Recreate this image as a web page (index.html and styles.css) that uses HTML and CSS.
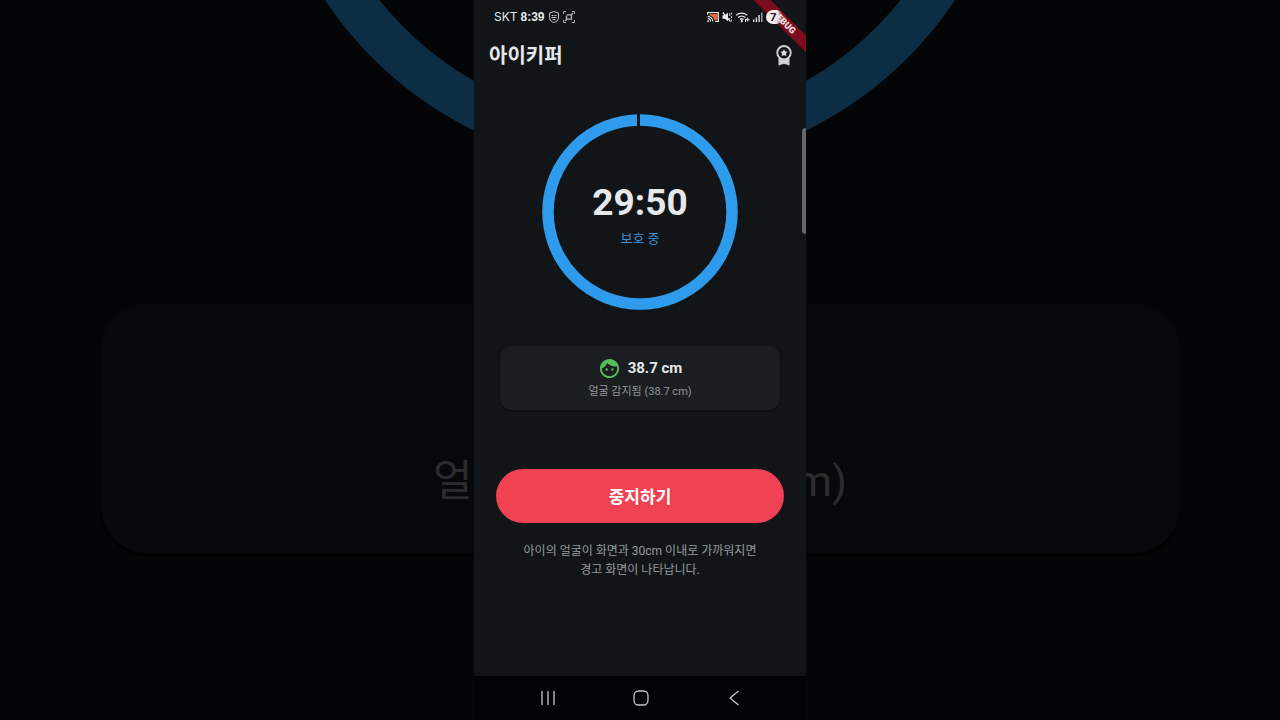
FILE: index.html
```html
<!DOCTYPE html>
<html lang="ko">
<head>
<meta charset="utf-8">
<meta name="viewport" content="width=device-width, initial-scale=1">
<title>아이키퍼</title>
<link rel="stylesheet" href="styles.css">
</head>
<body>
<div class="stage">
  <svg class="backdrop" viewBox="0 0 1280 720" preserveAspectRatio="xMidYMid slice" aria-hidden="true">
    <rect width="1280" height="720" fill="#030506"/>
    <circle cx="640" cy="-209" r="356" fill="none" stroke="#0d2d45" stroke-width="44"/>
    <rect x="101" y="307" width="1079" height="249" rx="46" fill="#010202"/>
    <rect x="101" y="304" width="1079" height="249" rx="46" fill="#070809"/>
    <text class="backdrop-text" x="433" y="496">얼</text>
    <text class="backdrop-text" x="847" y="496" text-anchor="end">m)</text>
  </svg>

  <div class="phone">
    <div class="ribbon">DEBUG</div>
    <div class="status">
      <div class="status-side">
        <span>SKT</span>
        <b class="clock">8:39</b>
        <svg class="glyph" viewBox="0 0 12 12" fill="none" stroke="#c4c7c8">
          <path d="M6 .6 10.500 2v4.800C10.500 9.500 8 10.900 6 11.500 4 10.900 1.500 9.500 1.500 6.800V2z"/>
          <path d="M3.500 4.500h2m1 0h2M3.500 6.500h5M4.500 8.500h3"/>
        </svg>
        <svg class="glyph" viewBox="0 0 12 12" fill="none" stroke="#b8bcbd">
          <path d="M.6 3V.6H3M9 .6h2.400V3M.6 9v2.400H3M9 11.400h2.400V9"/>
          <path d="M4 3.800h4.500v4.400H3.500V4.500M8 4l1.800-1.800M4 8 2.200 9.800" stroke-width="1.300"/>
        </svg>
      </div>
      <div class="status-side status-right">
        <svg class="glyph" viewBox="0 0 13 12">
          <path d="M2.500 2.500h9v7H8C7.500 6.500 5.500 4.600 2.500 4z" fill="#e8683f"/>
          <path d="M.7 3.500V1.200h11.600v9.600H8.500M.7 5.300a5.500 5.500 0 0 1 5.500 5.500M.7 7.700a3.100 3.100 0 0 1 3.100 3.100" fill="none" stroke="#eee" stroke-width="1.200"/>
          <circle cx="1.200" cy="10.500" r="1" fill="#eee"/>
        </svg>
        <svg class="glyph" viewBox="0 0 12 12">
          <path d="M1.500 4.200h2.300L7 1.800v8.400L3.800 7.800H1.500z" fill="#eee"/>
          <path d="M1.800 1.500 9.500 10.500" stroke="#eee" stroke-width="1.200"/>
          <path d="M8.700 2v3m0 2v1M10.500 1.500v2m0 1.500v2m0 1.500v2" stroke="#ccc"/>
        </svg>
        <svg class="glyph glyph-wide" viewBox="0 0 15 12" fill="none" stroke="#eee" stroke-width="1.300">
          <path d="M1.200 4.400a8 8 0 0 1 11 0M3.100 6.500a5.200 5.200 0 0 1 7.200 0M5 8.500a2.600 2.600 0 0 1 3.500 0"/>
          <circle cx="6.800" cy="10.200" r=".5"/>
          <path d="M10.500 8v3M12.700 6.500v4M11 8.700h3.500" stroke-width="1"/>
        </svg>
        <svg class="glyph" viewBox="0 0 12 12" fill="#e2e2e2">
          <path d="M1 8.500h1.400V11H1zM3.700 6.500h1.400V11H3.700zM6.400 4h1.400v7H6.400z"/>
          <path d="M9.100 1.500h1.400V11H9.100z" fill="#a5a8aa"/>
        </svg>
        <span class="battery">7</span>
      </div>
    </div>

    <header class="appbar">
      <h1 class="title">아이키퍼</h1>
      <button class="award" type="button" aria-label="보상">
        <svg viewBox="0 0 16 21">
          <path d="M2.500 12h11v8.500L8 18.700l-5.500 1.800z" fill="#cfd2d4"/>
          <circle cx="8" cy="7.700" r="6.700" fill="#111518" stroke="#cfd2d4" stroke-width="1.900"/>
          <path d="m8 4 1.100 2.500 2.700.3-2 1.800.6 2.700L8 9.900l-2.400 1.400.6-2.700-2-1.800 2.700-.3z" fill="#dfe2e4"/>
        </svg>
      </button>
    </header>

    <main class="content">
      <div class="timer">
        <svg class="ring" viewBox="0 0 196 196" aria-hidden="true">
          <circle cx="98" cy="98" r="92" fill="none" stroke="#2e9bec" stroke-width="11.500"/>
          <path d="M96.500 0v14" stroke="#111518" stroke-width="3"/>
        </svg>
        <div class="readout">
          <div class="time">29:50</div>
          <div class="state">보호 중</div>
        </div>
      </div>

      <section class="card">
        <div class="distance">
          <svg class="face" viewBox="0 0 24 24" fill="#57bb5b">
            <path d="M10.250 13a1.250 1.250 0 1 1-2.500 0 1.250 1.250 0 0 1 2.500 0zM15 11.750a1.250 1.250 0 1 0 0 2.500 1.250 1.250 0 0 0 0-2.500zM22 12c0 5.520-4.480 10-10 10S2 17.520 2 12 6.480 2 12 2s10 4.480 10 10zM20 12c0-.780-.120-1.530-.330-2.240-.700.150-1.420.240-2.170.240-3.130 0-5.920-1.440-7.760-3.690C8.690 8.870 6.600 10.880 4 11.860 4.010 11.900 4 11.950 4 12c0 4.410 3.590 8 8 8s8-3.590 8-8z"/>
          </svg>
          <strong>38.7 cm</strong>
        </div>
        <p class="detected">얼굴 감지됨 (38.7 cm)</p>
      </section>

      <button class="stop" type="button">중지하기</button>
      <p class="hint">아이의 얼굴이 화면과 30cm 이내로 가까워지면<br>경고 화면이 나타납니다.</p>
    </main>

    <div class="edge-handle"></div>

    <nav class="navbar">
      <button type="button" aria-label="최근 앱"><svg viewBox="0 0 16 16"><path d="M2 1v14M8 1v14M14 1v14"/></svg></button>
      <button type="button" aria-label="홈"><svg viewBox="0 0 16 16"><rect x="1" y="1" width="14" height="14" rx="4.500"/></svg></button>
      <button type="button" aria-label="뒤로"><svg viewBox="0 0 16 16"><path d="M12.500 1 4 8l8.500 7"/></svg></button>
    </nav>
  </div>
</div>
</body>
</html>
```

FILE: styles.css
```css
* {
  box-sizing: border-box;
}

body {
  margin: 0;
  background: #030506;
  color: #e6e8ea;
  font-family: Roboto, "Noto Sans CJK KR", sans-serif;
}

h1,
p {
  margin: 0;
}

button {
  border: 0;
  padding: 0;
  background: none;
  color: inherit;
  font: inherit;
  cursor: pointer;
}

.stage {
  position: relative;
  display: flex;
  justify-content: center;
  min-height: 100vh;
  overflow: hidden;
}

.backdrop {
  position: absolute;
  inset: 0;
  width: 100%;
  height: 100%;
}

.backdrop-text {
  fill: #2b2c2d;
  font-size: 43px;
}

.phone {
  position: relative;
  display: flex;
  flex-direction: column;
  min-height: 100vh;
  aspect-ratio: 83 / 180;
  overflow: hidden;
  background: #111518;
}

.ribbon {
  position: absolute;
  top: 16px;
  right: -28px;
  width: 100px;
  transform: rotate(45deg);
  background: #7c0d1c;
  color: #f4e6e8;
  font-size: 9px;
  font-weight: 900;
  line-height: 12px;
  text-align: center;
}

.status {
  position: relative;
  display: flex;
  justify-content: space-between;
  padding: 8px 23px 0 20px;
  font-family: Inter, sans-serif;
  font-size: 12px;
  line-height: 18px;
}

.status-side {
  display: flex;
  align-items: center;
  gap: 3px;
}

.status-right {
  gap: 2px;
}

.clock {
  font-family: "Liberation Sans", sans-serif;
}

.glyph {
  width: 12px;
  height: 12px;
}

.glyph-wide {
  width: 15px;
}

.battery {
  width: 17px;
  border-radius: 7px;
  background: linear-gradient(90deg, #f4ecee 60%, #f4ecee00);
  color: #35191d;
  font-size: 11px;
  font-weight: 700;
  line-height: 14px;
  padding-left: 4px;
}

.appbar {
  display: flex;
  align-items: center;
  justify-content: space-between;
  padding: 14px 14px 0 15px;
}

.title {
  padding-top: 2px;
  font-size: 20px;
  font-weight: 700;
  line-height: 28px;
}

.award {
  display: flex;
}

.award svg {
  width: 16px;
  height: 21px;
}

.content {
  flex: 1;
  display: flex;
  flex-direction: column;
  align-items: center;
  padding: 44px 22px 0;
}

.timer {
  display: grid;
  place-items: center;
}

.ring,
.readout {
  grid-area: 1 / 1;
}

.ring {
  width: 196px;
  height: 196px;
}

.readout {
  padding-top: 6px;
  text-align: center;
}

.time {
  font-size: 37px;
  font-weight: 700;
  line-height: 44px;
}

.state {
  margin-top: 4px;
  color: #4390d4;
  font-size: 13px;
  line-height: 20px;
}

.card {
  align-self: stretch;
  margin: 36px 4px 0;
  padding: 12px 12px 10px;
  border-radius: 12px;
  background: #1a1e21;
  box-shadow: 0 1px 2px #0a0c0e;
  text-align: center;
}

.distance {
  display: flex;
  align-items: center;
  justify-content: center;
  gap: 7px;
  font-size: 15px;
  line-height: 20px;
}

.face {
  width: 23px;
  height: 23px;
  margin: -2px 0;
}

.detected {
  margin-top: 6px;
  color: #929699;
  font-size: 11px;
  line-height: 16px;
}

.stop {
  align-self: stretch;
  margin-top: 59px;
  padding-top: 2px;
  border-radius: 27px;
  background: #f04252;
  color: #fff;
  font-size: 17px;
  font-weight: 700;
  line-height: 52px;
}

.hint {
  margin-top: 19px;
  color: #969a9d;
  font-size: 12px;
  line-height: 19px;
  text-align: center;
  white-space: nowrap;
}

.edge-handle {
  position: absolute;
  top: 128px;
  right: 0;
  width: 4px;
  height: 106px;
  border-radius: 4px 0 0 4px;
  background: #63676a;
}

.navbar {
  display: flex;
  justify-content: center;
  gap: 49px;
  padding-left: 2px;
  background: #020304;
}

.navbar button {
  display: flex;
  justify-content: center;
  align-items: center;
  width: 44px;
  height: 44px;
}

.navbar svg {
  width: 16px;
  height: 16px;
  fill: none;
  stroke: #c2c4c6;
  stroke-width: 1.300;
}
```
